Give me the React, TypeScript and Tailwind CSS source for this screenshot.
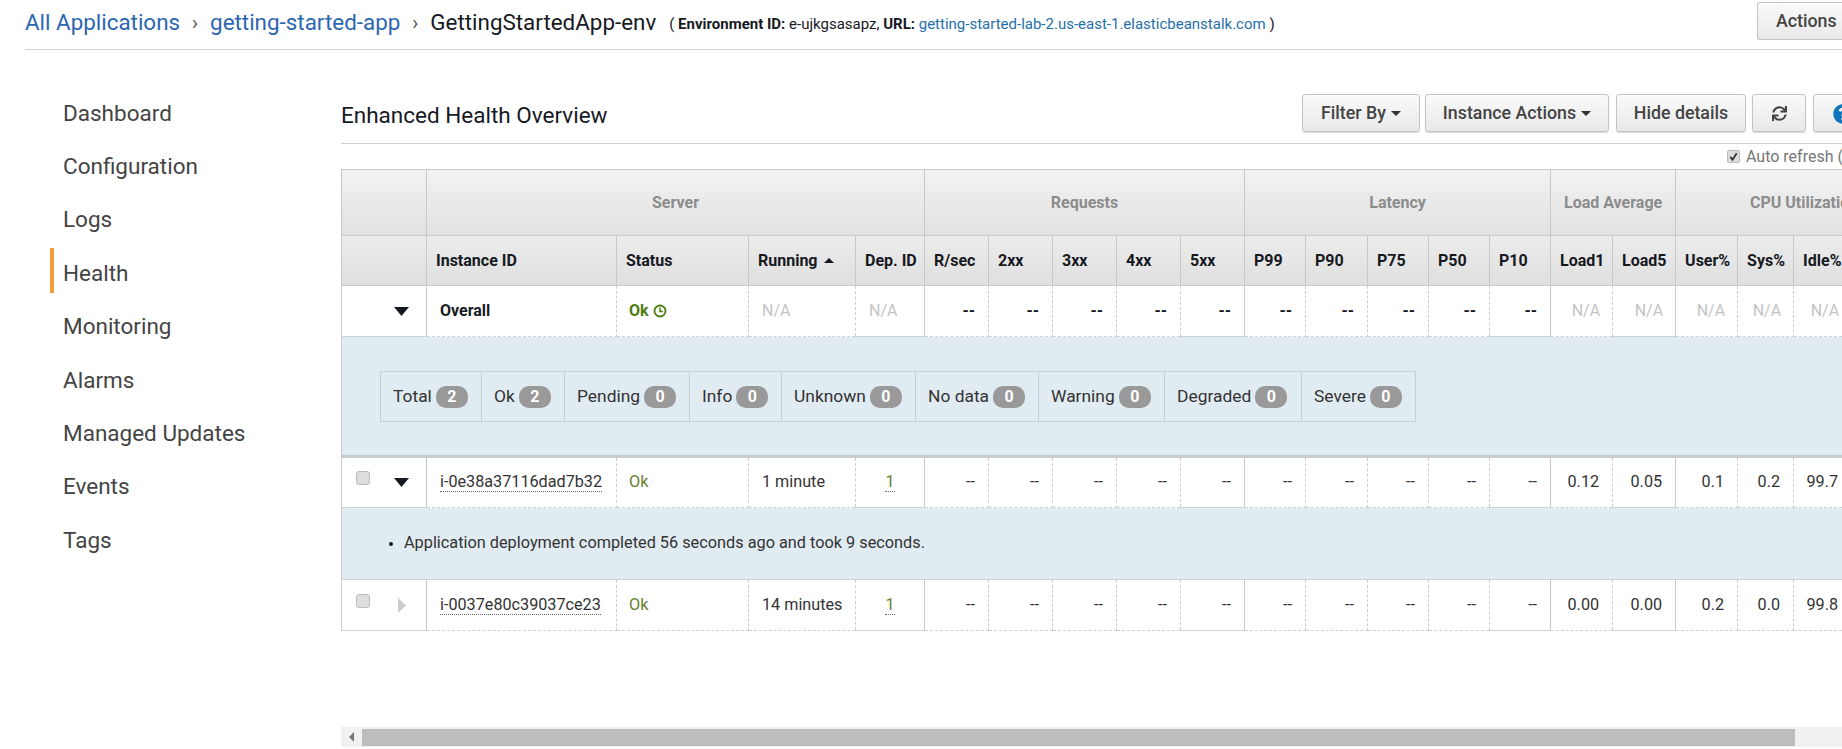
import { FaSync, FaQuestionCircle } from "react-icons/fa";

const cols = [
  "w-[85px]", "w-[190px]", "w-[132px]", "w-[107px]", "w-[69px]",
  "w-[64px]", "w-[64px]", "w-[64px]", "w-[64px]", "w-[64px]",
  "w-[61px]", "w-[62px]", "w-[61px]", "w-[61px]", "w-[61px]",
  "w-[62px]", "w-[63px]", "w-[62px]", "w-[56px]", "w-[58px]", "w-[81px]",
];

const nav = ["Dashboard", "Configuration", "Logs", "Health", "Monitoring", "Alarms", "Managed Updates", "Events", "Tags"];
const groups = [
  { label: "Server", span: 4 },
  { label: "Requests", span: 5 },
  { label: "Latency", span: 5 },
  { label: "Load Average", span: 2 },
  { label: "CPU Utilization", span: 4 },
];
const metricHeads = ["R/sec", "2xx", "3xx", "4xx", "5xx", "P99", "P90", "P75", "P50", "P10", "Load1", "Load5", "User%", "Sys%", "Idle%", "I/O%"];
const summary: [string, number][] = [
  ["Total", 2], ["Ok", 2], ["Pending", 0], ["Info", 0], ["Unknown", 0], ["No data", 0], ["Warning", 0], ["Degraded", 0], ["Severe", 0],
];
const summaryW = ["w-[100px]", "w-[83px]", "w-[125px]", "w-[92px]", "w-[134px]", "w-[123px]", "w-[126px]", "w-[137px]", "w-[115px]"];

const solidAfter = [4, 9, 11];

function metricBorder(i: number) {
  return solidAfter.includes(i) ? "border-r border-r-[#c8c8c8]" : "border-r border-dashed border-r-[#ccc]";
}

function Caret({ open, muted }: { open: boolean; muted?: boolean }) {
  return open ? (
    <svg width="15" height="9" viewBox="0 0 15 9" className="block"><path d="M0 0h15L7.500 9z" fill="#16191f" /></svg>
  ) : (
    <svg width="8" height="15" viewBox="0 0 8 15" className="block"><path d="M0 0l8 7.500L0 15z" fill={muted ? "#cccccc" : "#16191f"} /></svg>
  );
}

function Btn({ children, className }: { children: React.ReactNode; className: string }) {
  return (
    <div className={`h-[38px] shrink-0 flex items-center justify-center rounded-[3px] border border-[#c4c4c4] bg-gradient-to-b from-[#fafafa] to-[#e8e8e8] pt-[1px] text-[17.800px] font-medium text-[#444] shadow-[0_1px_1px_rgba(0,0,0,0.15)] ${className}`}>
      {children}
    </div>
  );
}

function Down() {
  return <span className="ml-[5px] inline-block w-0 h-0 border-x-[5px] border-x-transparent border-t-[5px] border-t-[#333]" />;
}

function InstanceRow({ id, open, running, values }: { id: string; open: boolean; running: string; values: string[] }) {
  return (
    <tr className="h-[51px] bg-white text-[16.200px]">
      <td className="border-l border-l-[#ccc] border-r border-r-[#c8c8c8] border-b border-b-[#ccd3d8] p-0">
        <div className="flex items-center pl-[14px]">
          <span className="-mt-[9px] block w-[14px] h-[14px] rounded-[3px] border border-[#bbb] bg-[#ddd]" />
          <span className="flex justify-center w-[15px] ml-[24px]">
            <Caret open={open} muted={!open} />
          </span>
        </div>
      </td>
      <td className="border-r border-dashed border-r-[#ccc] border-b border-b-[#ccd3d8] pl-[13px]">
        <span className="border-b border-dotted border-[#666] text-[#333]">{id}</span>
      </td>
      <td className="border-r border-dashed border-r-[#ccc] border-b border-b-[#ccd3d8] pl-[12px] text-[#66802f]">Ok</td>
      <td className="border-r border-dashed border-r-[#ccc] border-b border-b-[#ccd3d8] pl-[13px] text-[#333]">{running}</td>
      <td className="border-r border-r-[#c8c8c8] border-b border-b-[#ccd3d8] text-center text-[#66802f]">
        <span className="border-b border-dotted border-[#666]">1</span>
      </td>
      {values.map((v, i) => (
        <td key={i} className={`${metricBorder(i)} border-b border-b-[#ccd3d8] text-right pr-[13px] text-[#333]`}>{v}</td>
      ))}
    </tr>
  );
}

export default function App() {
  const dashes10 = Array(10).fill("--");
  return (
    <div className="w-[1842px] h-[749px] overflow-hidden bg-white flex flex-col font-['Roboto',sans-serif] text-[#16191f]">
      {/* top breadcrumb */}
      <div className="ml-[25px] h-[50px] shrink-0 border-b border-[#d0d0d0] flex items-start overflow-hidden">
        <div className="flex items-center h-[45px] flex-1 min-w-0 whitespace-nowrap">
          <span className="text-[22.400px] text-[#2b66b0]">All Applications</span>
          <span className="mx-[12px] text-[20px] text-[#555]">›</span>
          <span className="text-[22.400px] text-[#2b66b0]">getting-started-app</span>
          <span className="mx-[12px] text-[20px] text-[#555]">›</span>
          <span className="text-[22.400px] text-[#16191f]">GettingStartedApp-env</span>
          <span className="ml-[13px] mt-[3px] text-[15px] text-[#16191f]">
            ( <b className="font-bold">Environment ID:</b> e-ujkgsasapz, <b className="font-bold">URL:</b>{" "}
            <span className="text-[#1f6fa8]">getting-started-lab-2.us-east-1.elasticbeanstalk.com</span> )
          </span>
        </div>
        <div className="mt-[2px] w-[85px] shrink-0 h-[38px] pl-[18px] flex items-center whitespace-nowrap rounded-l-[3px] border border-r-0 border-[#c4c4c4] bg-gradient-to-b from-[#fafafa] to-[#e8e8e8] text-[17.800px] font-medium text-[#444]">
          Actions
        </div>
      </div>

      <div className="flex flex-1 min-h-0">
        {/* sidebar */}
        <div className="w-[341px] shrink-0 pl-[50px] pt-[38px] flex flex-col gap-[8.400px]">
          {nav.map((n) => (
            <div key={n} className={`h-[45px] flex items-center pl-[9px] pt-[6px] border-l-4 text-[22.500px] text-[#444] ${n === "Health" ? "border-l-[#f29d38]" : "border-l-transparent"}`}>
              {n}
            </div>
          ))}
        </div>

        {/* main */}
        <div className="flex-1 min-w-0 flex flex-col overflow-hidden">
          <div className="h-[94px] shrink-0 pt-[44px] flex items-start justify-between border-b border-[#d0d0d0]">
            <div className="text-[22.500px] leading-[42px] text-[#16191f]">Enhanced Health Overview</div>
            <div className="flex w-[540px] shrink-0 -mr-[1px]">
              <Btn className="w-[118px] -ml-[1px]">Filter By<Down /></Btn>
              <Btn className="w-[184px] ml-[5px]">Instance Actions<Down /></Btn>
              <Btn className="w-[130px] ml-[7px]">Hide details</Btn>
              <Btn className="w-[54px] ml-[6px] text-[#333]"><FaSync size={15} /></Btn>
              <Btn className="w-[54px] ml-[7px] justify-start pl-[19px] rounded-r-none"><FaQuestionCircle size={20} color="#0f73bb" className="shrink-0" /></Btn>
            </div>
          </div>
          <div className="h-[25px] shrink-0 flex items-center pl-[1386px] whitespace-nowrap text-[16px] text-[#777]">
            <span className="relative mr-[6px] w-[13px] h-[13px] rounded-[2px] border border-[#bbb] bg-[#ddd] shrink-0">
              <svg viewBox="0 0 12 12" className="absolute inset-0 w-[11px] h-[11px]"><path d="M2.500 6.500l2.500 3 4.500-7" fill="none" stroke="#333" strokeWidth="2" /></svg>
            </span>
            Auto refresh (
          </div>

          <table className="table-fixed border-collapse w-[1591px] shrink-0 text-[16px]">
            <colgroup>
              {cols.map((c, i) => <col key={i} className={c} />)}
            </colgroup>
            <thead>
              <tr className="h-[66px] bg-gradient-to-b from-[#f2f2f2] to-[#e1e1e1]">
                <th className="border border-[#c8c8c8]" />
                {groups.map((g) => (
                  <th key={g.label} colSpan={g.span} className="border border-[#c8c8c8] text-center font-bold text-[#8c8c8c]">{g.label}</th>
                ))}
              </tr>
              <tr className="h-[50px] bg-gradient-to-b from-[#ececec] to-[#dfdfdf]">
                <th className="border border-[#c8c8c8]" />
                {["Instance ID", "Status", "Running", "Dep. ID"].map((h) => (
                  <th key={h} className="border border-[#c8c8c8] text-left pl-[9px] font-bold text-[#16191f] whitespace-nowrap">
                    {h}
                    {h === "Running" && <span className="ml-[6px] inline-block align-middle mb-[2px] w-0 h-0 border-x-[5px] border-x-transparent border-b-[5px] border-b-[#16191f]" />}
                  </th>
                ))}
                {metricHeads.map((h) => (
                  <th key={h} className="border border-[#c8c8c8] text-left pl-[9px] font-bold text-[#16191f] whitespace-nowrap">{h}</th>
                ))}
              </tr>
            </thead>
            <tbody>
              <tr className="h-[51px] bg-white font-bold">
                <td className="border-l border-l-[#ccc] border-r border-r-[#c8c8c8] border-b border-b-[#ccd3d8] p-0">
                  <div className="flex justify-end pr-[17px]"><Caret open /></div>
                </td>
                <td className="border-r border-dashed border-r-[#ccc] border-b border-b-[#ccd3d8] pl-[13px]">Overall</td>
                <td className="border-r border-dashed border-r-[#ccc] border-b border-b-[#ccd3d8] pl-[12px] text-[#4d7c0f]">
                  <span className="inline-flex items-center gap-[4px]">Ok
                    <svg width="14" height="14" viewBox="0 0 14 14"><circle cx="7" cy="7" r="5.500" fill="none" stroke="#4d7c0f" strokeWidth="1.800" /><path d="M7 3.500V7.500H10" fill="none" stroke="#4d7c0f" strokeWidth="1.500" /></svg>
                  </span>
                </td>
                <td className="border-r border-dashed border-r-[#ccc] border-b border-b-[#ccd3d8] pl-[13px] font-normal text-[#c4c4c4]">N/A</td>
                <td className="border-r border-r-[#c8c8c8] border-b border-b-[#ccd3d8] pl-[13px] font-normal text-[#c4c4c4]">N/A</td>
                {dashes10.map((v, i) => (
                  <td key={i} className={`${metricBorder(i)} border-b border-b-[#ccd3d8] text-right pr-[13px]`}>{v}</td>
                ))}
                {["N/A", "N/A", "N/A", "N/A", "N/A", "N/A"].map((v, i) => (
                  <td key={i} className={`${metricBorder(i + 10)} border-b border-b-[#ccd3d8] text-right pr-[12px] font-normal text-[#c4c4c4]`}>{v}</td>
                ))}
              </tr>
              <tr className="h-[120px] bg-[#e1ebf2]">
                <td colSpan={21} className="border-l border-l-[#ccc] border-b-[3px] border-b-[#c4ccd2] p-0">
                  <div className="ml-[38px] flex w-[1036px] h-[51px] border border-[#c3ced6]">
                    {summary.map(([label, n], i) => (
                      <div key={label} className={`${summaryW[i]} shrink-0 flex items-center pl-[12px] pt-[1px] text-[17.400px] text-[#333] ${i ? "border-l border-[#c3ced6]" : ""}`}>
                        {label}
                        <span className="ml-[4px] w-[32px] h-[22px] rounded-[10px] bg-[#999] text-white text-[16px] font-bold flex items-center justify-center">{n}</span>
                      </div>
                    ))}
                  </div>
                </td>
              </tr>
              <InstanceRow id="i-0e38a37116dad7b32" open running="1 minute" values={[...dashes10, "0.12", "0.05", "0.1", "0.2", "99.7", "0.0"]} />
              <tr className="h-[72px] bg-[#e1ebf2]">
                <td colSpan={21} className="border-l border-l-[#ccc] border-b border-b-[#ccd3d8] p-0">
                  <div className="flex items-center pl-[47px] text-[16.300px] text-[#333]">
                    <span className="w-[4px] h-[4px] rounded-full bg-[#16191f] mr-[11px]" />
                    Application deployment completed 56 seconds ago and took 9 seconds.
                  </div>
                </td>
              </tr>
              <InstanceRow id="i-0037e80c39037ce23" open={false} running="14 minutes" values={[...dashes10, "0.00", "0.00", "0.2", "0.0", "99.8", "0.0"]} />
            </tbody>
          </table>

          <div className="flex-1" />

          <div className="h-[20px] mb-[2px] shrink-0 bg-[#f1f1f1] flex items-center">
            <div className="w-[21px] flex justify-center">
              <span className="w-0 h-0 border-y-[5px] border-y-transparent border-r-[5px] border-r-[#777]" />
            </div>
            <div className="w-[1433px] h-[17px] bg-[#bdbdbd]" />
          </div>
        </div>
      </div>
    </div>
  );
}
